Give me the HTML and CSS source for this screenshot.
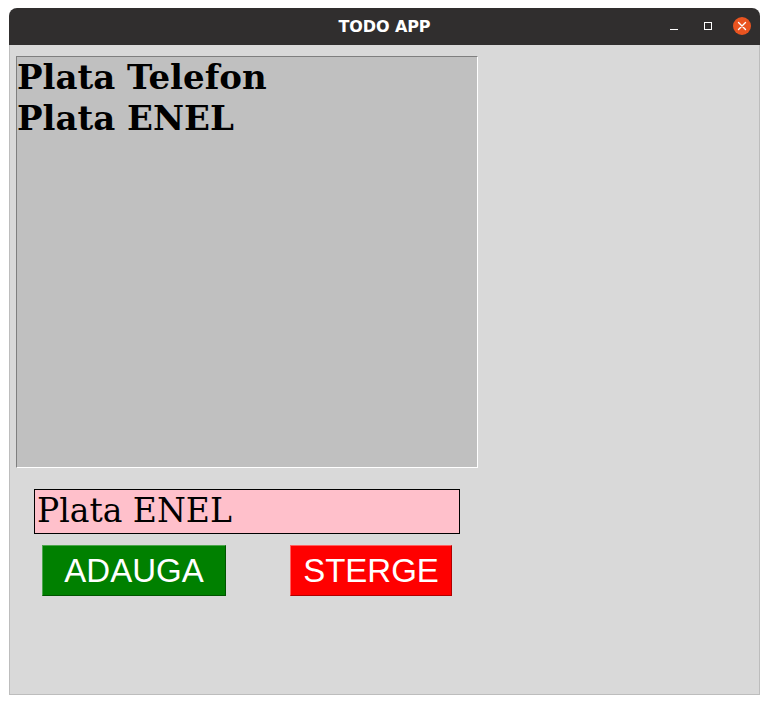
FILE: index.html
```html
<!DOCTYPE html>
<html>
<head>
<meta charset="utf-8">
<link rel="stylesheet" href="styles.css">
</head>
<body>
<div class="window">
  <div class="titlebar">
    <span class="title">TODO APP</span>
    <div class="controls">
      <span class="ctl min"></span>
      <span class="ctl max"></span>
      <span class="ctl close">
        <svg width="18" height="18" viewBox="0 0 18 18"><circle cx="9" cy="9" r="9" fill="#e95420"/><path d="M5.5 5.5 L12.5 12.5 M12.5 5.5 L5.5 12.5" stroke="#fff" stroke-width="1.4" stroke-linecap="round"/></svg>
      </span>
    </div>
  </div>
  <div class="content">
    <div class="listbox">
      <div class="item">Plata Telefon</div>
      <div class="item">Plata ENEL</div>
    </div>
    <div class="entry">Plata ENEL</div>
    <div class="buttons">
      <div class="btn add">ADAUGA</div>
      <div class="btn del">STERGE</div>
    </div>
  </div>
</div>
</body>
</html>
```
FILE: styles.css
```css
html, body {
  margin: 0;
  padding: 0;
  background: #ffffff;
}
.window {
  margin: 8px 0 0 9px;
  width: 751px;
  height: 687px;
  display: flex;
  flex-direction: column;
  box-sizing: border-box;
}
.titlebar {
  height: 37px;
  background: #302e2e;
  border-radius: 8px 8px 0 0;
  position: relative;
  display: flex;
  align-items: center;
  justify-content: center;
  flex: none;
}
.title {
  color: #ffffff;
  font-family: "DejaVu Sans", sans-serif;
  font-weight: bold;
  font-size: 16px;
  letter-spacing: -0.1px;
  margin-top: -1px;
}
.controls {
  position: absolute;
  right: 9px;
  top: 9px;
  display: flex;
  align-items: center;
  height: 18px;
}
.ctl {
  display: block;
}
.min {
  width: 8px;
  height: 1px;
  background: #ffffff;
  margin-top: 6px;
  margin-right: 26px;
}
.max {
  width: 6px;
  height: 6px;
  border: 1px solid #ffffff;
  margin-right: 21px;
}
.close {
  width: 18px;
  height: 18px;
}
.close svg {
  display: block;
}
.content {
  flex: 1;
  background: #d9d9d9;
  border: 1px solid #bdbdbd;
  border-top: none;
  padding: 11px 0 0 6px;
  display: flex;
  flex-direction: column;
  align-items: flex-start;
}
.listbox {
  width: 462px;
  height: 412px;
  box-sizing: border-box;
  background: #c0c0c0;
  border-top: 1px solid #7f7f7f;
  border-left: 1px solid #7f7f7f;
  border-right: 1px solid #ffffff;
  border-bottom: 1px solid #ffffff;
  padding: 0;
  font-family: "DejaVu Serif", serif;
  font-weight: bold;
  font-size: 34px;
  line-height: 41px;
  color: #000000;
}
.entry {
  margin: 21px 0 0 18px;
  width: 426px;
  height: 45px;
  box-sizing: border-box;
  background: #ffc0cb;
  border: 1px solid #000000;
  padding: 0 0 0 2px;
  font-family: "DejaVu Serif", serif;
  font-size: 33px;
  line-height: 42px;
  color: #000000;
}
.buttons {
  margin: 11px 0 0 26px;
  display: flex;
  gap: 64px;
}
.btn {
  height: 51px;
  box-sizing: border-box;
  display: flex;
  align-items: center;
  justify-content: center;
  font-family: "Liberation Sans", Arial, sans-serif;
  font-size: 33px;
  color: #ffffff;
}
.add {
  width: 184px;
  background: #008000;
  border-top: 1px solid #4da64d;
  border-left: 1px solid #4da64d;
  border-right: 1px solid #005500;
  border-bottom: 1px solid #005500;
}
.del {
  width: 162px;
  background: #ff0000;
  border-top: 1px solid #ff6060;
  border-left: 1px solid #ff6060;
  border-right: 1px solid #b00000;
  border-bottom: 1px solid #b00000;
}
```
